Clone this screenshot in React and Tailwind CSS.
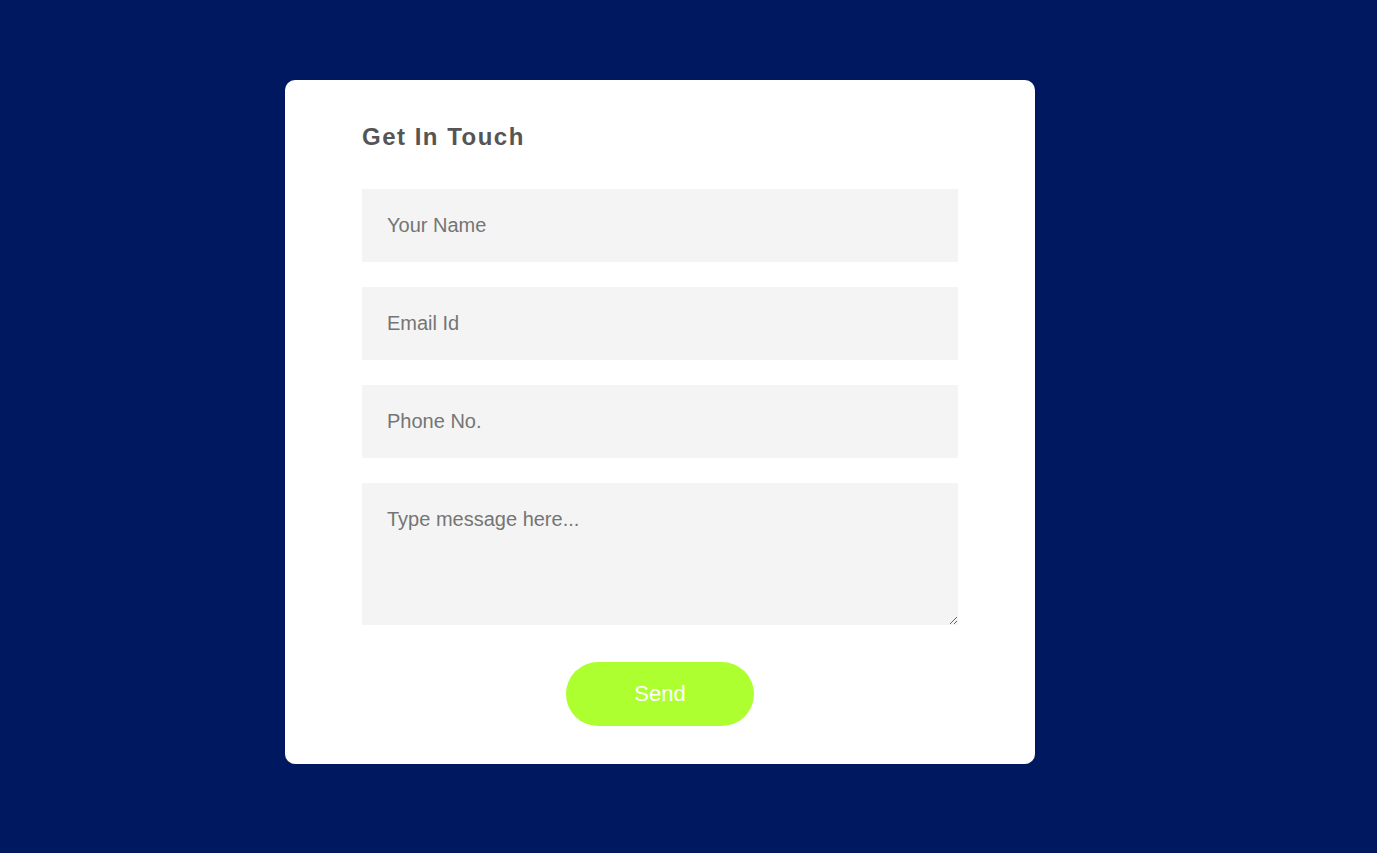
export default function App() {
  const font = { fontFamily: '"Liberation Sans", Arial, sans-serif' };
  return (
    <div className="min-h-[853px] w-full bg-[#001860] pt-[80px]" style={font}>
      <div className="ml-[285px] w-[750px] rounded-[10px] bg-white px-[77px] pt-[42px] pb-[38px]">
        <h2 className="mb-[37px] text-[24px] leading-[30px] font-bold tracking-[1.5px] text-[#555555]">
          Get In Touch
        </h2>
        <form className="flex flex-col" onSubmit={(e) => e.preventDefault()}>
          <input
            type="text"
            placeholder="Your Name"
            className="mb-[25px] block h-[73px] w-full bg-[#f4f4f4] px-[25px] text-[20px] text-[#333] outline-none placeholder:text-[#757575]"
          />
          <input
            type="email"
            placeholder="Email Id"
            className="mb-[25px] block h-[73px] w-full bg-[#f4f4f4] px-[25px] text-[20px] text-[#333] outline-none placeholder:text-[#757575]"
          />
          <input
            type="text"
            placeholder="Phone No."
            className="mb-[25px] block h-[73px] w-full bg-[#f4f4f4] px-[25px] text-[20px] text-[#333] outline-none placeholder:text-[#757575]"
          />
          <textarea
            placeholder="Type message here..."
            className="block h-[142px] w-full bg-[#f4f4f4] px-[25px] pt-[25px] text-[20px] leading-[23px] text-[#333] outline-none placeholder:text-[#757575]"
          />
          <div className="mt-[37px] flex justify-center">
            <button
              type="submit"
              className="h-[64px] w-[188px] rounded-full bg-[#adff2f] pb-[2px] text-[22px] text-white"
            >
              Send
            </button>
          </div>
        </form>
      </div>
    </div>
  );
}
